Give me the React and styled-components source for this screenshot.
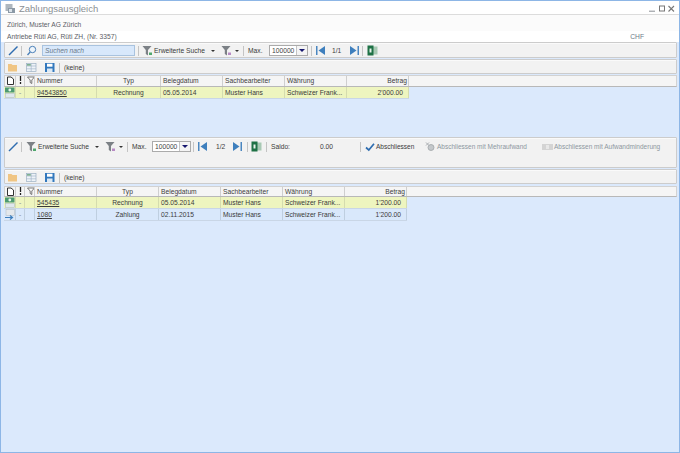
import React from 'react';
import styled, { createGlobalStyle } from 'styled-components';

const Global = createGlobalStyle`
  html, body { margin: 0; padding: 0; background: #fff; }
  #root { width: 680px; height: 453px; }
  * { box-sizing: border-box; }
`;
const Win = styled.div`
  width: 680px; height: 453px; display: flex; flex-direction: column;
  border: 1px solid #8db6e6; background: #dbe9fc;
  font-family: "Liberation Sans", Arial, sans-serif; font-size: 6.7px; color: #3c3c3c; overflow: hidden;
`;
const TitleBar = styled.div`
  height: 14px; flex: none; background: #fff; border-bottom: 1px solid #dcdcdc;
  display: flex; align-items: center; padding: 1px 4px 0 4px; gap: 3px;
`;
const Title = styled.div`
  flex: 1; font-size: 9.5px; color: #8a8f94; line-height: 13px;
`;
const WinButtons = styled.div`display: flex; gap: 3px; align-items: center;`;
const InfoRow = styled.div`
  height: ${p => p.$h}px; flex: none; background: ${p => p.$bg}; display: flex; align-items: center;
  padding: ${p => p.$pt || 0}px 6px 0 6px; justify-content: space-between; font-size: 6.7px; color: #5c6066;
`;
const Currency = styled.span`margin-right: 29px; color: #6c7a88;`;
const Toolbar = styled.div`
  height: ${p => p.$h}px; flex: none; margin: ${p => p.$mt || 0}px 2px 0 3px; background: #f2f2f2;
  border: 1px solid #cccccc; border-radius: 1px; display: flex; align-items: flex-start;
  padding-left: 3px; box-shadow: inset 0 1px 0 #fafafa;
`;
const TbRow = styled.div`height: ${p => p.$h || 15}px; display: flex; align-items: center; flex: none;`;
const Sep = styled.div`width: 1px; height: 10px; background: #c4c4c4; margin: 0 ${p => p.$r}px 0 ${p => p.$l}px; flex: none;`;
const Gap = styled.div`width: ${p => p.$w}px; flex: none;`;
const Search = styled.div`
  width: 93px; height: 11px; background: #d8e8fb; border: 1px solid #a9c3df;
  font-style: italic; font-size: 6.7px; line-height: 9px; padding-left: 2px; color: #6b7a8a; flex: none;
`;
const Label = styled.span`
  white-space: nowrap; margin-left: ${p => p.$ml || 0}px; width: ${p => p.$w}px;
  color: ${p => p.$dim ? '#8d979f' : '#3a3a3a'}; font-size: ${p => p.$small ? 6.5 : 6.7}px; flex: none;
`;
const Combo = styled.div`
  width: 39px; height: 11px; border: 1px solid #ababab; background: #fff; display: flex; flex: none;
  font-size: 6.7px; align-items: center; padding-left: 2px; justify-content: space-between; color: #444;
`;
const ComboBtn = styled.div`
  width: 11px; height: 9px; background: #f4f4f4; border-left: 1px solid #c4c4c4; display: flex; align-items: center; justify-content: center;
`;
const ComboArrow = styled.div`
  width: 0; height: 0; border-left: 3px solid transparent; border-right: 3px solid transparent; border-top: 3px solid #16166e;
`;
const Caret = styled.div`
  width: 4px; height: 0; border-left: 2px solid transparent; border-right: 2px solid transparent; border-top: 2px solid #333; margin-left: ${p => p.$ml}px; flex: none;
`;
const Pane = styled.div`height: ${p => p.$h}px; flex: none; display: flex; flex-direction: column;`;
const HeaderBar = styled.div`
  height: ${p => p.$h}px; margin: ${p => p.$mt}px 2px 0 3px; background: #f5f5f5; border: 1px solid #d2d2d2; border-bottom-color: #b8b8b8;
  display: flex; flex: none;
`;
const HCell = styled.div`
  width: ${p => p.$w}px; flex: none; border-right: 1px solid #cfcfcf; padding: 0 ${p => p.$a === 'right' ? 1 : 2}px;
  text-align: ${p => p.$a || 'left'}; line-height: 10px; font-size: 6.7px; color: #3d3d3d; white-space: nowrap; overflow: hidden;
`;
const GridRow = styled.div`
  height: 12px; margin-left: 3px; display: flex; flex: none; background: ${p => p.$bg};
  width: ${p => p.$width}px; border-bottom: 1px solid #c9d6e6;
`;
const Cell = styled.div`
  width: ${p => p.$w}px; flex: none; border-right: 1px solid ${p => p.$line}; padding: 0 ${p => p.$r ? 5 : 2}px 0 2px;
  text-align: ${p => p.$a || 'left'}; line-height: 12px; font-size: 6.7px; color: ${p => p.$dim ? '#8b8b8b' : '#3a3a3a'}; white-space: nowrap; overflow: hidden;
  text-decoration: ${p => p.$u ? 'underline' : 'none'};
`;
const IconCell = styled.div`
  width: 12px; flex: none; border-right: 1px solid ${p => p.$line}; display: flex; align-items: center; justify-content: flex-end;
`;

const Pencil = () => <svg width="11" height="11" viewBox="0 0 11 11"><path d="M1 10 9.500 1.500" stroke="#2f6db0" strokeWidth="1.400" fill="none" /></svg>;
const Magnifier = () => <svg width="11" height="11" viewBox="0 0 11 11"><circle cx="6.500" cy="4.500" r="3.200" fill="#eef5fb" stroke="#4b80b8" /><path d="M4.200 7 1.500 10" stroke="#4b80b8" strokeWidth="1.300" /></svg>;
const Funnel = ({ badge }) => <svg width="11" height="11" viewBox="0 0 11 11"><path d="M0.500 1h9L6 5v5.500L3.800 9V5z" fill="#7c8186" /><rect x={7} y={7.500} width="3" height="2.500" fill={badge} /></svg>;
const First = () => <svg width="10" height="11" viewBox="0 0 10 11"><rect x="0" y="1" width="1.500" height="9" fill="#4a86c0" /><path d="M9 1v9L2.500 5.500z" fill="#3e7fbd" /></svg>;
const Last = () => <svg width="10" height="11" viewBox="0 0 10 11"><path d="M1 1v9l6.500-4.500z" fill="#3e7fbd" /><rect x="8.500" y="1" width="1.500" height="9" fill="#4a86c0" /></svg>;
const Excel = () => <svg width="11" height="11" viewBox="0 0 11 11"><rect x="5" y="1.500" width="5.500" height="8" fill="#a8c9b4" /><rect x="0.500" y="0.500" width="6" height="10" fill="#1e7145" /><path d="M2.500 3.500h2v4h-2z" fill="#e8f3ec" /></svg>;
const Folder = () => <svg width="11" height="11" viewBox="0 0 11 11"><path d="M0 2h3.500l1 1H9v6.500H0z" fill="#f0c583" /></svg>;
const GridIcon = () => <svg width="11" height="11" viewBox="0 0 11 11"><rect x="0.500" y="1.500" width="9.500" height="8" fill="#eef3f8" stroke="#9cb0c4" strokeWidth=".7" /><path d="M.5 4h9.500M5.200 1.500v8M.5 6.800h9.500" stroke="#9cb0c4" strokeWidth=".6" /><rect x="1" y="2" width="3.800" height="1.700" fill="#7fb091" /></svg>;
const Save = () => <svg width="11" height="11" viewBox="0 0 11 11"><rect x="0" y="1" width="9.500" height="9" fill="#3278bd" /><rect x="2" y="1.700" width="5.500" height="3" fill="#fff" /><rect x="2" y="6.500" width="5.500" height="3.500" fill="#dce9f5" /></svg>;
const Check = () => <svg width="10" height="10" viewBox="0 0 10 10"><path d="M1 5.500 3.800 8 9 1.800" stroke="#2f6db0" strokeWidth="1.700" fill="none" /></svg>;
const Gears = () => <svg width="10" height="11" viewBox="0 0 10 11"><circle cx="6" cy="6.500" r="3" fill="#c4c8cb" stroke="#9fa4a8" strokeWidth=".8" /><path d="M1 1.500l3 3M4 1.500l-3 3" stroke="#a9adb1" strokeWidth="1" /></svg>;
const Bill = () => <svg width="11" height="6" viewBox="0 0 11 6"><rect width="11" height="6" fill="#d4d4d4" /><rect x="4" y="1" width="3" height="4" fill="#e8e8e8" /></svg>;
const DocIcon = () => <svg width="7" height="9" viewBox="0 0 7 9"><path d="M.5 1h3.500L6.500 3v5.500H.5z" fill="#fff" stroke="#333" /></svg>;
const Bang = () => <svg width="3" height="8" viewBox="0 0 3 8"><path d="M1.500 0v5M1.500 6v2" stroke="#222" strokeWidth="1.300" /></svg>;
const HFilter = () => <svg width="8" height="8" viewBox="0 0 8 8"><path d="M.5 1h7L4.800 4v3.500L3.200 6.500V4z" fill="#fff" stroke="#555" strokeWidth=".8" /></svg>;
const RowInvoice = () => <svg width="10" height="11" viewBox="0 0 10 11"><rect y="0.500" width="9.500" height="5" fill="#4d9a72" /><circle cx="4.800" cy="3" r="1.400" fill="#e8f5ec" /><rect x="0.500" y="6.500" width="9" height="4" fill="#dfe7ee" stroke="#a5b3c0" strokeWidth=".5" /></svg>;
const RowPay = () => <svg width="10" height="11" viewBox="0 0 10 11"><rect x="1" y="0.500" width="8.500" height="6" fill="#e4e8ec" stroke="#aeb6be" strokeWidth=".5" /><path d="M0 8.500h7M5 6.500l2.500 2-2.500 2" stroke="#3f7fbd" strokeWidth="1.200" fill="none" /></svg>;
const WinMin = () => <svg width="7" height="8" viewBox="0 0 7 8"><path d="M0 7.200h6" stroke="#8a8f94" strokeWidth="1" /></svg>;
const WinMax = () => <svg width="6" height="7" viewBox="0 0 6 7"><rect x=".5" y="1" width="5" height="5" fill="none" stroke="#777" /></svg>;
const WinClose = () => <svg width="7" height="7" viewBox="0 0 7 7"><path d="M.5 1 6 6.500M6 1 .5 6.500" stroke="#777" strokeWidth="1.100" /></svg>;
const AppIcon = () => <svg width="11" height="11" viewBox="0 0 11 11"><rect x="0.500" y="1" width="7" height="7" fill="#aeb7bf" /><rect x="3" y="5" width="7" height="5" fill="#8b99a6" /><rect x="4" y="6" width="3" height="3" fill="#dbe3ea" /></svg>;

const Second = () => (
  <TbRow>
    <Folder /><Gap $w={7} /><GridIcon /><Gap $w={8} /><Save />
    <Sep $l={3} $r={4} /><Label>(keine)</Label>
  </TbRow>
);

const Grid = ({ cols, width, rows, headerH, headerMt }) => (
  <>
    <HeaderBar $h={headerH} $mt={headerMt}>
      <HCell $w={11}><DocIcon /></HCell>
      <HCell $w={9} $a="center"><Bang /></HCell>
      <HCell $w={10} $a="center"><HFilter /></HCell>
      {cols.map(c => <HCell key={c.n} $w={c.w} $a={c.a}>{c.n}</HCell>)}
    </HeaderBar>
    {rows.map(r => (
      <GridRow key={r.v[0]} $bg={r.bg} $width={width}>
        <IconCell $line={r.line}>{r.pay ? <RowPay /> : <RowInvoice />}</IconCell>
        <Cell $w={9} $a="center" $line={r.line} $dim>-</Cell>
        <Cell $w={10} $line={r.line} />
        {r.v.map((t, i) => (
          <Cell key={i} $w={cols[i].w} $a={cols[i].a} $u={i === 0} $r={i === 5} $line={r.line}>{t}</Cell>
        ))}
      </GridRow>
    ))}
  </>
);

const cols1 = [
  { n: 'Nummer', w: 62 }, { n: 'Typ', w: 64, a: 'center' }, { n: 'Belegdatum', w: 62 },
  { n: 'Sachbearbeiter', w: 62 }, { n: 'Währung', w: 62 }, { n: 'Betrag', w: 62, a: 'right' },
];
const cols2 = [
  { n: 'Nummer', w: 62 }, { n: 'Typ', w: 62, a: 'center' }, { n: 'Belegdatum', w: 62 },
  { n: 'Sachbearbeiter', w: 62 }, { n: 'Währung', w: 62 }, { n: 'Betrag', w: 62, a: 'right' },
];
const Y = { bg: '#eef5bf', line: '#d5dcae' };
const B = { bg: '#d9e8fb', line: '#bfcfe0' };

export default function App() {
  return (
    <Win>
      <Global />
      <TitleBar>
        <AppIcon />
        <Title>Zahlungsausgleich</Title>
        <WinButtons><WinMin /><WinMax /><WinClose /></WinButtons>
      </TitleBar>
      <InfoRow $h={16} $pt={2} $bg="#fbfbfb">Zürich, Muster AG Zürich</InfoRow>
      <InfoRow $h={11} $bg="#fff">Antriebe Rüti AG, Rüti ZH, (Nr. 3357)<Currency>CHF</Currency></InfoRow>
      <Pane $h={95}>
        <Toolbar $h={16}>
          <TbRow>
            <Pencil /><Sep $l={2} $r={4} /><Magnifier /><Gap $w={5} /><Search>Suchen nach</Search>
            <Sep $l={3} $r={3} /><Funnel badge="#4fa76d" /><Label $ml={1} $w={51}>Erweiterte Suche</Label><Caret $ml={6} /><Gap $w={6} />
            <Funnel badge="#b78ac4" /><Caret $ml={3} />
            <Sep $l={4} $r={4} /><Label $w={16}>Max.</Label><Gap $w={5} /><Combo>100000<ComboBtn><ComboArrow /></ComboBtn></Combo>
            <Sep $l={3} $r={4} /><First /><Label $ml={6} $w={13}>1/1</Label><Gap $w={4} /><Last />
            <Sep $l={3} $r={4} /><Excel />
          </TbRow>
        </Toolbar>
        <Toolbar $h={15} $mt={1}><Second /></Toolbar>
        <Grid cols={cols1} width={405} headerH={12} headerMt={1} rows={[{ ...Y, v: ['94543850', 'Rechnung', '05.05.2014', 'Muster Hans', 'Schweizer Frank...', "2'000.00"] }]} />
      </Pane>
      <Pane $h={314}>
        <Toolbar $h={31}>
          <TbRow $h={17}>
            <Pencil /><Sep $l={2} $r={4} /><Funnel badge="#4fa76d" /><Label $ml={1} $w={51}>Erweiterte Suche</Label><Caret $ml={6} /><Gap $w={6} />
            <Funnel badge="#b78ac4" /><Caret $ml={3} />
            <Sep $l={4} $r={4} /><Label $w={16}>Max.</Label><Gap $w={4} /><Combo>100000<ComboBtn><ComboArrow /></ComboBtn></Combo>
            <Sep $l={2} $r={4} /><First /><Label $ml={8} $w={10}>1/2</Label><Gap $w={6} /><Last />
            <Sep $l={5} $r={3} /><Excel /><Sep $l={4} $r={4} /><Label $w={17}>Saldo:</Label><Label $ml={32} $w={13}>0.00</Label>
            <Sep $l={27} $r={4} /><Check /><Label $ml={1} $w={38} $small>Abschliessen</Label><Gap $w={11} />
            <Gears /><Label $ml={2} $w={91} $dim $small>Abschliessen mit Mehraufwand</Label><Gap $w={14} />
            <Bill /><Label $ml={1} $w={108} $dim $small>Abschliessen mit Aufwandminderung</Label>
          </TbRow>
        </Toolbar>
        <Toolbar $h={15} $mt={1}><Second /></Toolbar>
        <Grid cols={cols2} width={403} headerH={11} headerMt={2} rows={[
          { ...Y, v: ['545435', 'Rechnung', '05.05.2014', 'Muster Hans', 'Schweizer Frank...', "1'200.00"] },
          { ...B, pay: true, v: ['1080', 'Zahlung', '02.11.2015', 'Muster Hans', 'Schweizer Frank...', "1'200.00"] },
        ]} />
      </Pane>
    </Win>
  );
}
